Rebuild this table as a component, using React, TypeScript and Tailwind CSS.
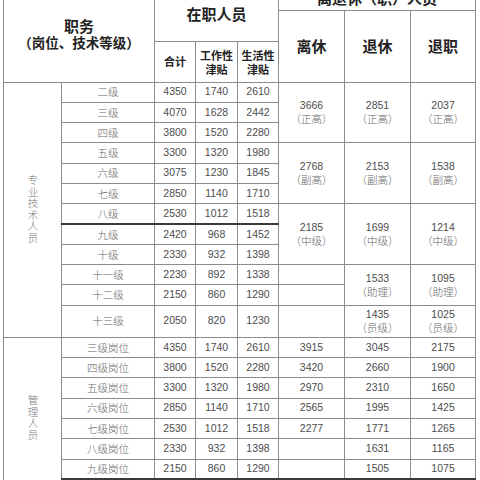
import React from 'react';

const cjk = "font-['Noto_Sans_CJK_SC',sans-serif]";
const num = "font-['Liberation_Sans',Arial,sans-serif]";

const cell = 'border border-[#8c8c8c] p-0 text-center align-middle';
const numCell = `${cell} ${num} text-[10.5px] text-[#4d4d4d]`;
const labelCell = `${cell} ${cjk} font-light text-[10.5px] text-[#666]`;
const thick = 'border-b-2 border-b-[#3a3a3a]';

const tech: Array<[string, number, number, number]> = [
  ['二级', 4350, 1740, 2610],
  ['三级', 4070, 1628, 2442],
  ['四级', 3800, 1520, 2280],
  ['五级', 3300, 1320, 1980],
  ['六级', 3075, 1230, 1845],
  ['七级', 2850, 1140, 1710],
  ['八级', 2530, 1012, 1518],
  ['九级', 2420, 968, 1452],
  ['十级', 2330, 932, 1398],
  ['十一级', 2230, 892, 1338],
  ['十二级', 2150, 860, 1290],
  ['十三级', 2050, 820, 1230],
];

// merged retiree cells for the technical rows, keyed by the row they start on
const retireGroups: Record<number, { span: number; note: string; vals: [number, number, number] }> = {
  0: { span: 3, note: '正高', vals: [3666, 2851, 2037] },
  3: { span: 3, note: '副高', vals: [2768, 2153, 1538] },
  6: { span: 3, note: '中级', vals: [2185, 1699, 1214] },
};

const mgmt: Array<[string, number, number, number, number | '', number, number]> = [
  ['三级岗位', 4350, 1740, 2610, 3915, 3045, 2175],
  ['四级岗位', 3800, 1520, 2280, 3420, 2660, 1900],
  ['五级岗位', 3300, 1320, 1980, 2970, 2310, 1650],
  ['六级岗位', 2850, 1140, 1710, 2565, 1995, 1425],
  ['七级岗位', 2530, 1012, 1518, 2277, 1771, 1265],
  ['八级岗位', 2330, 932, 1398, '', 1631, 1165],
  ['九级岗位', 2150, 860, 1290, '', 1505, 1075],
];

const Note = ({ value, note }: { value: number; note: string }) => (
  <div className="flex flex-col items-center leading-[14px]">
    <span className={`${num} text-[10.5px] text-[#4d4d4d]`}>{value}</span>
    <span className={`${cjk} font-light text-[10.5px] text-[#666]`}>（{note}）</span>
  </div>
);

const Vertical = ({ text }: { text: string }) => (
  <div className="flex justify-center">
    <span
      className={`${cjk} font-light text-[10.5px] leading-[14px] tracking-[1px] text-[#777] [writing-mode:vertical-rl]`}
    >
      {text}
    </span>
  </div>
);

const App = () => {
  return (
    <div className="w-[480px] h-[480px] overflow-hidden bg-white pl-[3px]">
      <table className="-mt-[14px] border-collapse table-fixed w-[472px]">
        <colgroup>
          <col className="w-[58px]" />
          <col className="w-[93px]" />
          <col className="w-[41px]" />
          <col className="w-[42px]" />
          <col className="w-[41px]" />
          <col className="w-[66px]" />
          <col className="w-[66px]" />
          <col className="w-[65px]" />
        </colgroup>
        <thead>
          <tr className="h-[22px]">
            <th colSpan={2} rowSpan={3} className={`${cell} ${cjk} font-bold text-[#222]`}>
              <div className="flex flex-col items-center">
                <span className="text-[15px] leading-[17px]">职务</span>
                <span className="text-[13.5px] leading-[17px]">（岗位、技术等级）</span>
              </div>
            </th>
            <th colSpan={3} rowSpan={2} className={`${cell} ${cjk} font-bold text-[15px] text-[#222]`}>
              在职人员
            </th>
            <th colSpan={3} className={`${cell} ${cjk} font-bold text-[15px] text-[#222]`}>
              离退休（职）人员
            </th>
          </tr>
          <tr className="h-[31px]">
            <th rowSpan={2} className={`${cell} ${cjk} font-bold text-[15px] text-[#222]`}>离休</th>
            <th rowSpan={2} className={`${cell} ${cjk} font-bold text-[15px] text-[#222]`}>退休</th>
            <th rowSpan={2} className={`${cell} ${cjk} font-bold text-[15px] text-[#222]`}>退职</th>
          </tr>
          <tr className="h-[41px]">
            <th className={`${cell} ${cjk} font-bold text-[11px] text-[#222]`}>合计</th>
            <th className={`${cell} ${cjk} font-bold text-[11px] leading-[14px] text-[#222]`}>
              工作性
              <br />
              津贴
            </th>
            <th className={`${cell} ${cjk} font-bold text-[11px] leading-[14px] text-[#222]`}>
              生活性
              <br />
              津贴
            </th>
          </tr>
        </thead>
        <tbody>
          {tech.map(([name, total, work, life], i) => {
            const group = retireGroups[i];
            const b = i === 6 ? thick : '';
            const h = i === 11 ? 'h-[32px]' : 'h-[20.3px]';
            return (
              <tr key={name} className={h}>
                {i === 0 && (
                  <td rowSpan={12} className={cell}>
                    <Vertical text="专业技术人员" />
                  </td>
                )}
                <td className={`${labelCell} ${b}`}>{name}</td>
                <td className={`${numCell} ${b}`}>{total}</td>
                <td className={`${numCell} ${b}`}>{work}</td>
                <td className={`${numCell} ${b}`}>{life}</td>
                {group &&
                  group.vals.map((v, k) => (
                    <td key={k} rowSpan={group.span} className={cell}>
                      <Note value={v} note={group.note} />
                    </td>
                  ))}
                {i >= 9 && <td className={cell} />}
                {i === 9 && (
                  <>
                    <td rowSpan={2} className={cell}>
                      <Note value={1533} note="助理" />
                    </td>
                    <td rowSpan={2} className={cell}>
                      <Note value={1095} note="助理" />
                    </td>
                  </>
                )}
                {i === 11 && (
                  <>
                    <td className={cell}>
                      <Note value={1435} note="员级" />
                    </td>
                    <td className={cell}>
                      <Note value={1025} note="员级" />
                    </td>
                  </>
                )}
              </tr>
            );
          })}
          {mgmt.map(([name, total, work, life, a, b2, c], i) => {
            const b = i === 6 ? thick : '';
            return (
              <tr key={name} className="h-[20.3px]">
                {i === 0 && (
                  <td rowSpan={8} className={cell}>
                    <Vertical text="管理人员" />
                  </td>
                )}
                <td className={`${labelCell} ${b}`}>{name}</td>
                <td className={`${numCell} ${b}`}>{total}</td>
                <td className={`${numCell} ${b}`}>{work}</td>
                <td className={`${numCell} ${b}`}>{life}</td>
                <td className={`${numCell} ${b}`}>{a}</td>
                <td className={`${numCell} ${b}`}>{b2}</td>
                <td className={`${numCell} ${b}`}>{c}</td>
              </tr>
            );
          })}
          <tr className="h-[20.3px]">
            <td className={cell} />
            <td className={cell} />
            <td className={cell} />
            <td className={cell} />
            <td className={cell} />
            <td className={cell} />
            <td className={cell} />
          </tr>
        </tbody>
      </table>
    </div>
  );
};

export default App;
